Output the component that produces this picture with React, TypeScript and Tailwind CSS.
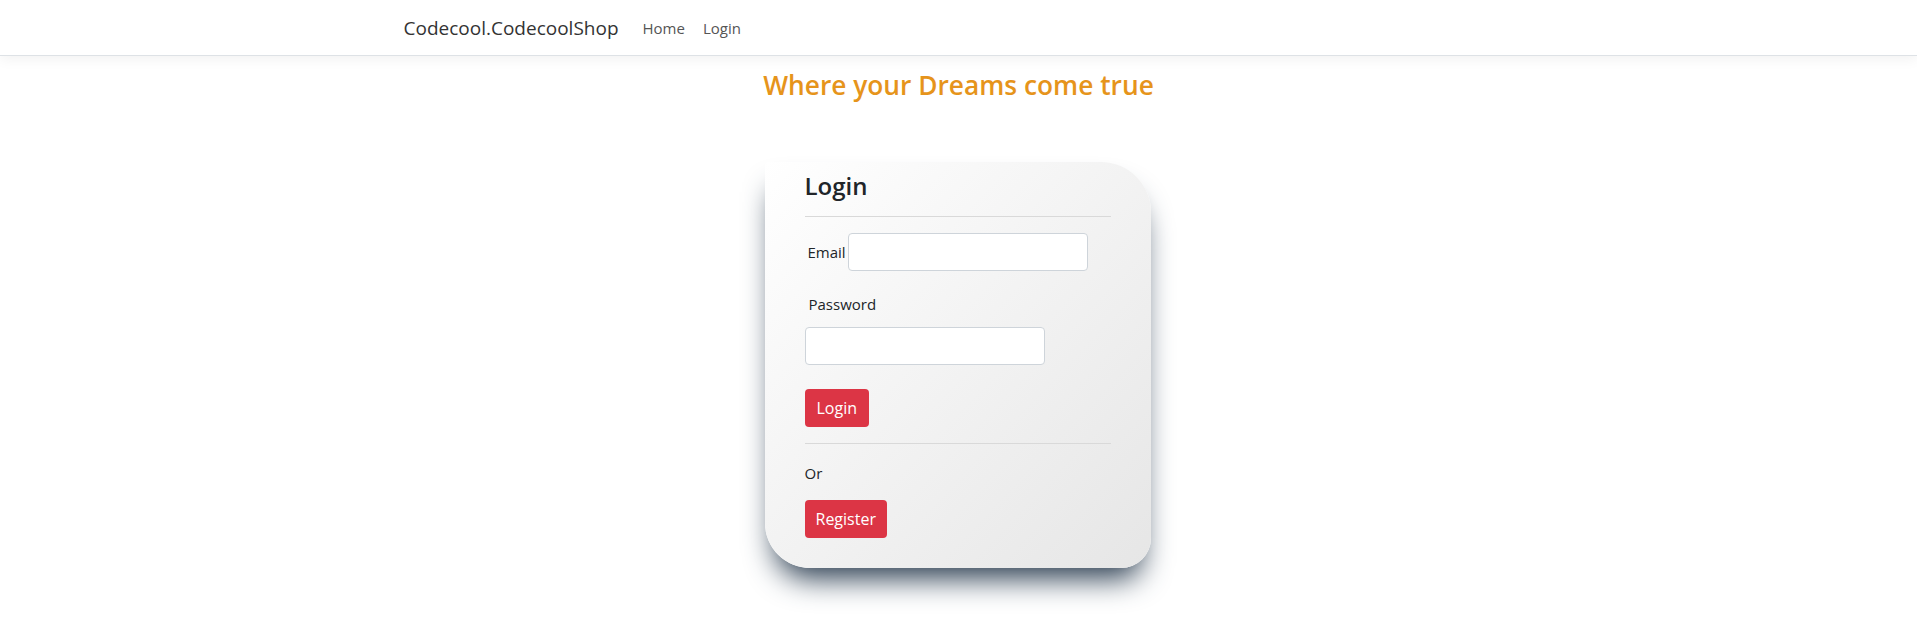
import React from "react";

export default function App() {
  return (
    <div className="min-h-screen bg-white text-[#212529]" style={{ fontFamily: '"Open Sans", "Noto Sans", sans-serif' }}>
      <nav className="h-[56px] border-b border-[#dee2e6] bg-white shadow-[0_4px_12px_rgba(0,0,0,0.05)]">
        <div className="mx-auto flex h-full w-[1140px] items-center px-[15px]">
          <span className="mr-[15px] text-[19px] leading-[30px] text-[#333]">Codecool.CodecoolShop</span>
          <span className="px-[9px] text-[15px] leading-[24px] text-[#555]">Home</span>
          <span className="px-[9px] text-[15px] leading-[24px] text-[#555]">Login</span>
        </div>
      </nav>
      <main className="flex flex-col items-center">
        <h3 className="mt-[12px] text-[26.3px] font-semibold leading-[34px] text-[#e6941b]">Where your Dreams come true</h3>
        <div className="mt-[60px] -translate-x-[1px] w-[386px] rounded-[4px_50px_30px_45px] bg-gradient-to-br from-white to-[#e6e6e6] px-[40px] pb-[30px] pt-[9px] shadow-[0_20px_30px_-10px_rgb(38,57,77)]">
          <h4 className="text-[24px] font-semibold leading-[29px] text-[#212529]">Login</h4>
          <div className="mt-[16px] border-t border-[#d9d9d9]" />
          <div className="mt-[16px] flex items-center">
            <label className="ml-[3px] mr-[2px] text-[15px] leading-[24px]">Email</label>
            <div className="h-[38px] w-[240px] rounded-[4px] border border-[#ced4da] bg-white" />
          </div>
          <div className="ml-[4px] mt-[21px] text-[15px] leading-[24px]">Password</div>
          <div className="mt-[11px] h-[38px] w-[240px] rounded-[4px] border border-[#ced4da] bg-white" />
          <button className="mt-[24px] h-[38px] rounded-[4px] bg-[#dc3545] px-[12px] text-[16px] leading-[24px] text-white">Login</button>
          <div className="mt-[16px] border-t border-[#d9d9d9]" />
          <div className="mt-[17px] text-[15px] leading-[24px]">Or</div>
          <button className="mt-[15px] h-[38px] rounded-[4px] bg-[#dc3545] px-[11px] text-[16px] leading-[24px] text-white">Register</button>
        </div>
      </main>
    </div>
  );
}
